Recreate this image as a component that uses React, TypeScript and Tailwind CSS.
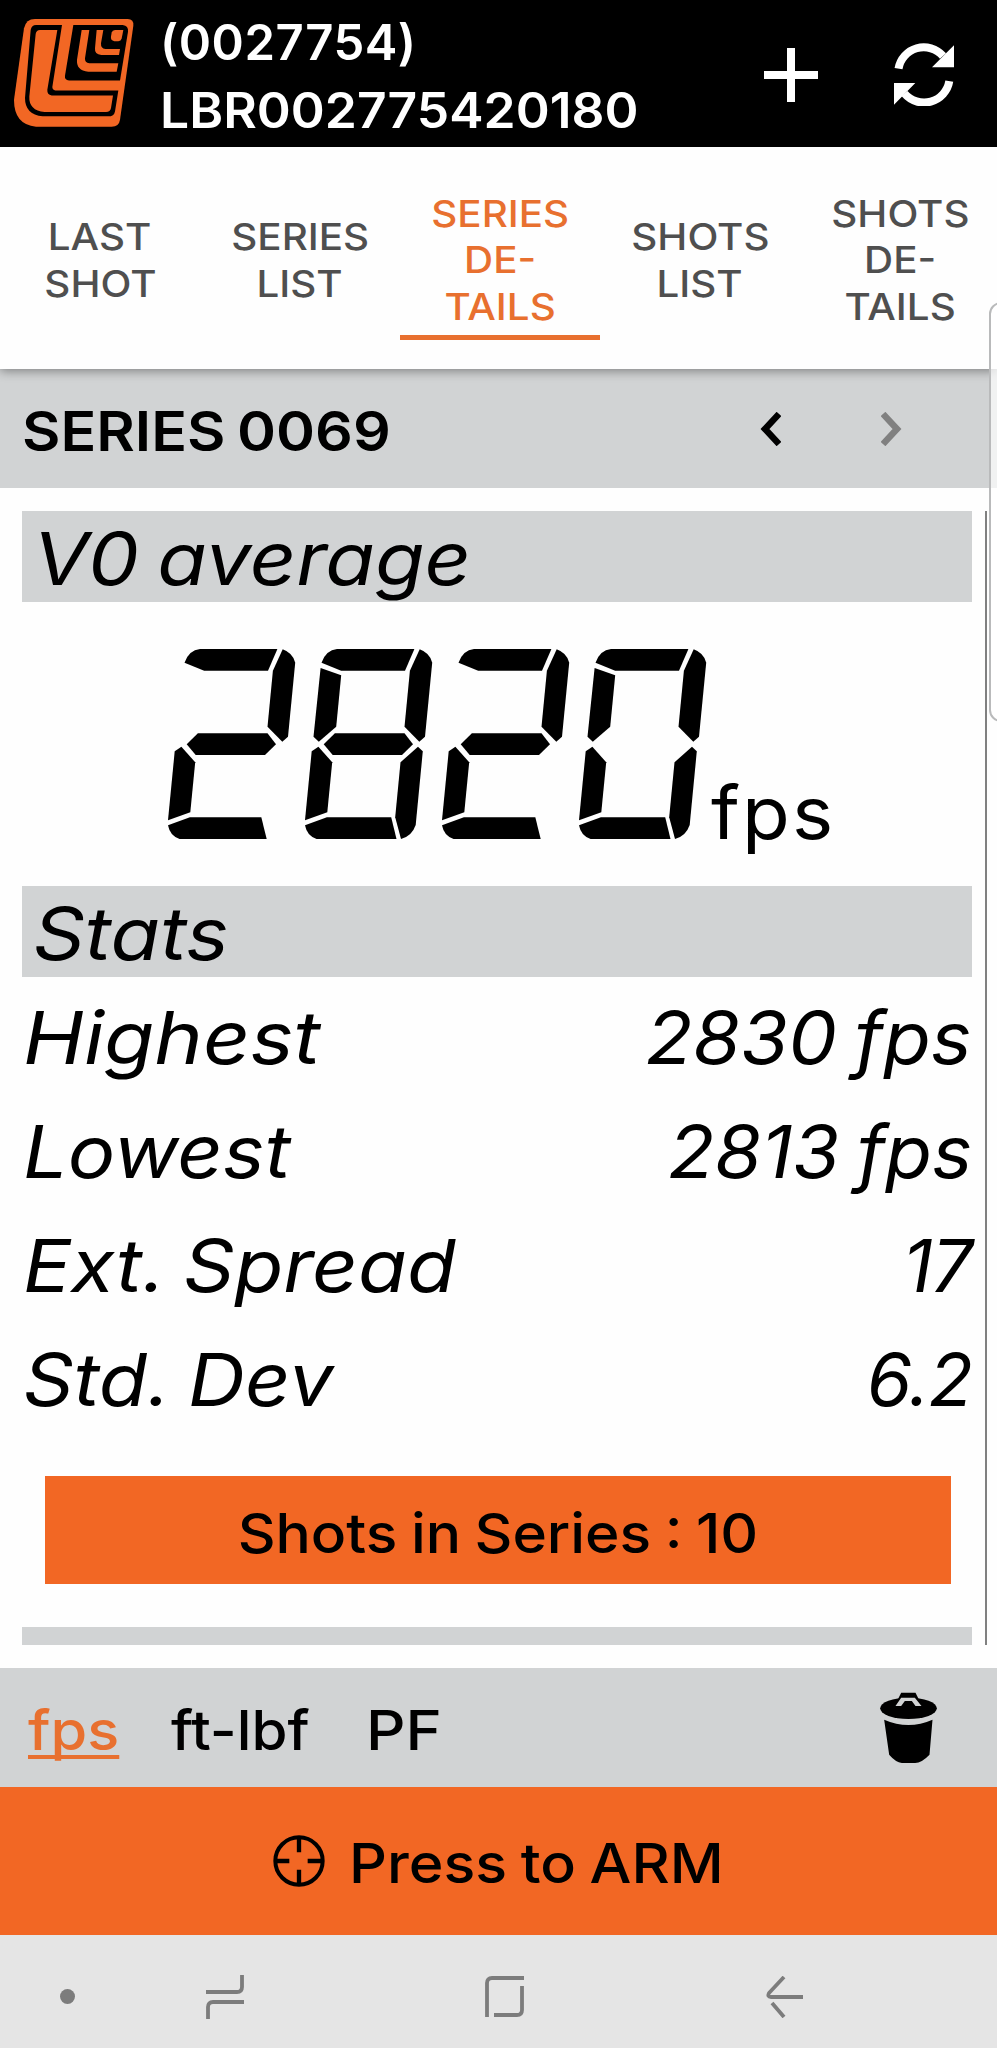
import type { ReactNode } from "react";
import clsx from "clsx";

const TABS = [
  { lines: ["LAST", "SHOT"] },
  { lines: ["SERIES", "LIST"] },
  { lines: ["SERIES", "DE-", "TAILS"], active: true },
  { lines: ["SHOTS", "LIST"] },
  { lines: ["SHOTS", "DE-", "TAILS"] },
];

const STATS = [
  { label: "Highest", value: "2830 fps", labelCls: "scale-x-[1.125]", valueCls: "scale-x-[1.06]" },
  { label: "Lowest", value: "2813 fps", labelCls: "scale-x-[1.085]", valueCls: "scale-x-[1.045]" },
  { label: "Ext. Spread", value: "17", labelCls: "scale-x-[1.093]", valueCls: "tracking-[-1px]" },
  { label: "Std. Dev", value: "6.2", labelCls: "scale-x-[1.083]", valueCls: "tracking-[-1px]" },
];

// seven segment display
const SEGMENTS: Record<string, string> = {
  a: "M16.5 13.7Q21 1 32 0H109.4L100 21.7H36.2Z",
  b: "M114.7 .3Q125 4 127.2 13.7L120 87.7L114.3 92.7L99.5 77.7L104.9 21.7Z",
  c: "M113 97.7L117.8 102.3L110.7 176Q107 187 96 190L90.2 168.3L95.5 113.3Z",
  d: "M0 176.3L21.9 168.3H86.2L91.5 190H11.6Q2 187 0 176.3Z",
  // bottom bar runs longer when segment c is off
  D: "M0 176.3L21.9 168.3H93.3L98.7 190H11.6Q2 187 0 176.3Z",
  e: "M13.4 97.7L27.2 113.3L22.3 163.3L0 171.3L6.7 102.3Z",
  f: "M15.6 19L36.2 26.3L31.2 77.7L13.8 92.7L8.5 87.7Z",
  g: "M18.7 95.3L29.9 84.3H99.5L108 95.3L97 106H27.7Z",
};

const LIT: Record<string, string> = { "0": "abcdef", "2": "abgeD", "8": "abcdefg" };

function SegmentDisplay({ value }: { value: string }) {
  return (
    <svg role="img" aria-label={value} className="h-[190px] w-[539px] shrink-0" viewBox="0 0 539 190">
      {value.split("").map((ch, i) => (
        <g key={i} transform={`translate(${i * 137} 0)`}>
          {LIT[ch].split("").map((s) => (
            <path key={s} d={SEGMENTS[s]} />
          ))}
        </g>
      ))}
    </svg>
  );
}

function Logo() {
  return (
    <svg className="h-[108px] w-[120px] shrink-0" viewBox="42 57 360 325" preserveAspectRatio="none">
      <path fill="#f26724" d="M105 57H383Q402 58 400 77L360 360Q357 381 335 381H108Q42 375 42 300L72 85Q78 57 105 57Z" />
      <path d="M108 75H186L157 262Q157 271 166 272H355L345 335Q342 350 325 350H128Q75 345 75 295L92 90Q95 75 108 75Z" />
      <path fill="#f26724" d="M120 90H172L142 270Q141 285 155 287H339L333 325Q331 337 318 337H134Q86 332 88 290L107 102Q109 90 120 90Z" />
      <path d="M220 75H368Q386 77 384 95L360 242H207Q193 241 195 228Z" />
      <path fill="#f26724" d="M245 90H268L255 175Q254 188 268 190H355L350 216H265Q228 212 231 180Z" />
      <path fill="#f26724" d="M290 90H310L303 130Q302 146 316 147H360L357 165H304Q283 163 285 145Z" />
      <path fill="#f26724" d="M345 90H370L365 116Q363 124 355 124H343Q331 122 333 110L335 98Q337 90 345 90Z" />
    </svg>
  );
}

function SectionTitle({ children }: { children: ReactNode }) {
  return (
    <h2 className="h-[91px] bg-[#d1d3d4] pt-[5px] pl-[11px] text-[73px] leading-[86px] italic">
      <span className="inline-block origin-left scale-x-[1.108] [word-spacing:-4px]">{children}</span>
    </h2>
  );
}

export default function App() {
  return (
    <div className="relative flex h-[2048px] w-[997px] flex-col overflow-hidden bg-[#fefefe] font-['Inter',sans-serif] text-black">
      <header className="flex h-[147px] shrink-0 items-start bg-black pl-[14px] text-white">
        <div className="pt-[19px]">
          <Logo />
        </div>
        <div className="ml-[26px] w-[601px] pt-[9px] text-[49px] leading-[68px] font-semibold whitespace-nowrap">
          <div className="tracking-[0.5px]">(0027754)</div>
          <div className="origin-left scale-x-[1.052]">LBR002775420180</div>
        </div>
        <svg className="mt-[48px] ml-[3px] h-[54px] w-[54px]" viewBox="0 0 54 54" stroke="white" strokeWidth="8">
          <path d="M27 0V54M0 27H54" />
        </svg>
        <svg className="mt-[43px] ml-[76px] h-[63px] w-[60px]" viewBox="0 0 60 63" fill="none" stroke="white" strokeWidth="8">
          <path d="M4.5 25.7A25.6 25.6 0 0 1 49 13" />
          <path d="M55.3 38.2A25.6 25.6 0 0 1 10.5 50.5" />
          <path fill="white" stroke="none" d="M60 2.3V24.3H38ZM0 40H21.3L0 61.7Z" />
        </svg>
      </header>

      <nav className="relative z-10 flex h-[222px] shrink-0 bg-[#fefefe] shadow-[0_2px_10px_rgba(0,0,0,0.4)]">
        {TABS.map((t, i) => (
          <div
            key={i}
            className={clsx(
              "flex h-[193px] w-[200px] shrink-0 flex-col items-center justify-center border-b-[5px] pt-[39px] text-[37px] leading-[46.5px] font-medium",
              t.active ? "border-[#e8702f] text-[#e8702f]" : "border-transparent text-[#4f4f4f]",
            )}
          >
            {t.lines.map((l) => (
              <span key={l} className="scale-x-[1.09]">{l}</span>
            ))}
          </div>
        ))}
      </nav>

      <div className="flex h-[119px] shrink-0 items-center bg-[#d1d3d4] pl-[22px]">
        <div className="w-[738px] pt-[5px]">
          <h1 className="inline-block origin-left scale-x-[1.075] text-[55px] font-semibold [word-spacing:-3px]">SERIES 0069</h1>
        </div>
        <svg className="h-[34px] w-[21px]" viewBox="0 0 21 34" fill="none" stroke="black" strokeWidth="6.5">
          <path d="M19 2L5 17L19 32" />
        </svg>
        <svg className="ml-[100px] h-[34px] w-[21px]" viewBox="0 0 21 34" fill="none" stroke="#808080" strokeWidth="6.5">
          <path d="M2 2L16 17L2 32" />
        </svg>
      </div>

      <main className="mt-[23px] mr-[10px] ml-[22px] h-[1134px] shrink-0 overflow-hidden border-r-2 border-[#808080] pr-[13px]">
        <SectionTitle>V0 average</SectionTitle>
        <div className="flex h-[284px] items-baseline pt-[47px] pl-[146px]">
          <SegmentDisplay value="2820" />
          <span className="ml-[4px] origin-left scale-x-[1.07] text-[73px] leading-none tracking-[2px]">fps</span>
        </div>
        <SectionTitle>Stats</SectionTitle>
        <div className="pt-[4px]">
          {STATS.map((s) => (
            <div key={s.label} className="flex h-[114px] items-center justify-between pl-px text-[73px] italic [word-spacing:-4px]">
              <span className={clsx("origin-left", s.labelCls)}>{s.label}</span>
              <span className={clsx("origin-right", s.valueCls)}>{s.value}</span>
            </div>
          ))}
        </div>
        <div className="mt-[39px] mr-[21px] ml-[23px] flex h-[108px] items-center justify-center bg-[#f26724] pt-[6px] text-[55px] font-medium">
          <span className="scale-x-[1.067] [word-spacing:-2px]">Shots in Series : 10</span>
        </div>
        <div className="mt-[43px] h-[91px] bg-[#d1d3d4]" />
      </main>

      <div className="mt-[23px] flex h-[119px] shrink-0 items-center bg-[#d1d3d4] pl-[28px] text-[55px] font-medium">
        <div className="flex w-[852px] items-center pt-[5px]">
          <div className="w-[143px] text-[#e8702f]">
            <span className="inline-block origin-left scale-x-[1.08] underline decoration-[4px] underline-offset-[5px] [text-decoration-skip-ink:none]">
              fps
            </span>
          </div>
          <div className="w-[195px]">
            <span className="inline-block origin-left scale-x-[1.06]">ft-lbf</span>
          </div>
          <span className="origin-left scale-x-[1.12]">PF</span>
        </div>
        <svg className="h-[71px] w-[57px]" viewBox="60 62 170 213">
          <ellipse cx="145" cy="111" rx="85" ry="32" />
          <path d="M123 64H166L178 88H111Z" />
          <path fill="#d1d3d4" d="M106 104L123 79H164L184 104H166L155 89H134L123 104Z" />
          <path d="M72 145Q145 177 217 145L208 250Q184 275 165 275H125Q107 273 87 250Z" />
        </svg>
      </div>

      <button className="flex h-[148px] shrink-0 items-center bg-[#f26724] pl-[273px] text-[55px] font-medium">
        <svg className="h-[52px] w-[52px]" viewBox="0 0 156 156" fill="none" stroke="black">
          <circle cx="78" cy="78" r="71" strokeWidth="12" />
          <path strokeWidth="13" d="M78 4V52M78 104V152M4 78H49M104 78H152" />
        </svg>
        <span className="ml-[24px] origin-left scale-x-[1.075] pt-[5px] [word-spacing:-2px]">Press to ARM</span>
      </button>

      <footer className="flex h-[113px] shrink-0 items-center bg-[#e5e5e5] pt-[10px] pl-[60px]">
        <span className="h-[15px] w-[15px] rounded-full bg-[#7c7c7c]" />
        <svg className="ml-[131px] h-[44px] w-[38px]" viewBox="0 0 38 44" fill="none" stroke="#7c7c7c" strokeWidth="3.8">
          <path d="M36 0V12Q36 17 31 17H0M38 27H7Q2 27 2 32V44" />
        </svg>
        <svg className="ml-[241px] h-[41px] w-[40px]" viewBox="0 0 40 41" fill="none" stroke="#7c7c7c" strokeWidth="3.8">
          <path d="M2 41V7Q2 2 7 2H39M37 10V34Q37 39 32 39H9" />
        </svg>
        <svg className="ml-[241px] h-[42px] w-[38px]" viewBox="0 0 38 42" fill="none" stroke="#7c7c7c" strokeWidth="3.8">
          <path d="M37 21H5Q1 21 3 17L18 1M6 27L18 41" />
        </svg>
      </footer>

      {/* edge panel handle */}
      <div className="absolute top-[302px] left-[989px] z-20 h-[420px] w-[24px] rounded-[16px] border-2 border-[#b9babb] bg-white/70" />
    </div>
  );
}
